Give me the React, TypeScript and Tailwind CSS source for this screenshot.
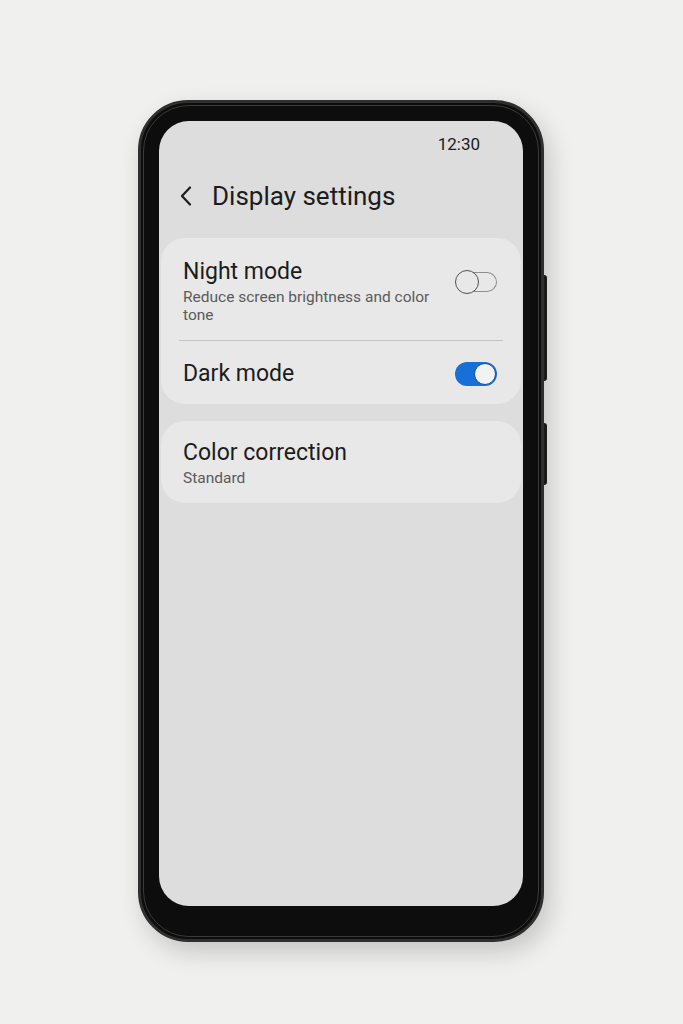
function Toggle({ on }: { on: boolean }) {
  if (on) {
    return (
      <div className="relative h-[24px] w-[42px] shrink-0 rounded-full bg-[#1770d8]">
        <div className="absolute right-[1px] top-[1px] h-[22px] w-[22px] rounded-full border-[1.5px] border-[#1b4f96] bg-[#f2f2f2]" />
      </div>
    );
  }
  return (
    <div className="relative h-[24px] w-[42px] shrink-0">
      <div className="absolute left-[10px] right-0 top-[2px] h-[20px] rounded-r-full border-[1.5px] border-l-0 border-[#8d8d8d]" />
      <div className="absolute left-0 top-0 h-[24px] w-[24px] rounded-full border-[1.5px] border-[#505050] bg-[#e8e8e8]" />
    </div>
  );
}

export default function App() {
  return (
    <div
      className="flex min-h-[1024px] w-full justify-center bg-[#f0f0ef] pr-[1px] pt-[100px]"
      style={{ fontFamily: "Roboto, 'Noto Sans', sans-serif" }}
    >
      <div className="relative h-[842px] w-[406px] rounded-[50px] border-[3px] border-[#2f2f2f] bg-[#0d0d0d] px-[18px] pb-[33px] pt-[18px] shadow-[6px_10px_24px_rgba(0,0,0,0.18)]">
        <div className="pointer-events-none absolute inset-[2px] rounded-[46px] border border-[#3a3a3a]" />
        <div className="absolute -right-[6px] top-[172px] h-[106px] w-[3px] rounded-r bg-[#1a1a1a]" />
        <div className="absolute -right-[6px] top-[320px] h-[62px] w-[3px] rounded-r bg-[#1a1a1a]" />

        <div className="flex h-[785px] flex-col rounded-[30px] bg-[#dddddd] px-[2px]">
          <div className="flex justify-end pr-[41px] pt-[13px] text-[17px] leading-[20px] text-[#202020]">
            12:30
          </div>

          <div className="mt-[27px] flex items-center pl-[19px]">
            <svg width="12" height="20" viewBox="0 0 12 20" fill="none" className="shrink-0">
              <path d="M10 1.5 L2 10 L10 18.5" stroke="#1c1c1c" strokeWidth="2.2" strokeLinecap="round" strokeLinejoin="round" />
            </svg>
            <span className="ml-[20px] text-[26px] leading-[30px] text-[#1c1c1c]">
              Display settings
            </span>
          </div>

          <div className="mt-[27px] rounded-[24px] bg-[#e8e8e8]">
            <div className="flex items-start justify-between pl-[22px] pr-[24px] pb-[16px] pt-[21px]">
              <div className="w-[252px]">
                <div className="text-[23px] leading-[26px] text-[#1c1c1c]">Night mode</div>
                <div className="mt-[3px] text-[15.5px] leading-[18px] text-[#5b5b5b]">
                  Reduce screen brightness and color tone
                </div>
              </div>
              <div className="mt-[11px]">
                <Toggle on={false} />
              </div>
            </div>
            <div className="mx-[18px] h-px bg-[#c2c2c2]" />
            <div className="flex items-center justify-between pl-[22px] pr-[24px] pb-[17px] pt-[20px]">
              <div className="text-[23px] leading-[26px] text-[#1c1c1c]">Dark mode</div>
              <Toggle on />
            </div>
          </div>

          <div className="mt-[17px] rounded-[24px] bg-[#e8e8e8] pl-[22px] pb-[16px] pt-[19px]">
            <div className="text-[23px] leading-[26px] text-[#1c1c1c]">Color correction</div>
            <div className="mt-[3px] text-[15.5px] leading-[18px] text-[#5b5b5b]">Standard</div>
          </div>
        </div>
      </div>
    </div>
  );
}
